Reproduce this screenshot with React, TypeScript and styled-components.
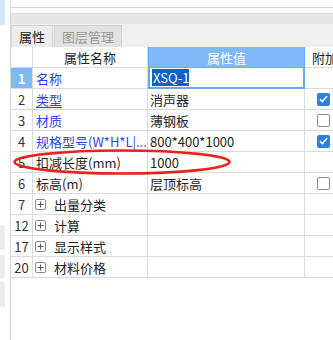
import React from "react";
import styled, { createGlobalStyle, css } from "styled-components";

const Global = createGlobalStyle`
  html, body { margin: 0; padding: 0; background: #ffffff; overflow: hidden; }
  body { font-family: "Microsoft YaHei", "Noto Sans CJK SC", "Noto Sans", sans-serif; }
`;

const Page = styled.div`
  position: relative;
  display: flex;
  width: 333px;
  height: 340px;
  overflow: hidden;
  background: #fff;
`;

const LeftStrip = styled.div`
  width: 10px;
  flex: none;
  display: flex;
  flex-direction: column;
`;

const StripBlock = styled.div<{ $h: number; $color: string; $gap?: number }>`
  width: 5px;
  height: ${(p) => p.$h}px;
  margin-top: ${(p) => p.$gap ?? 0}px;
  background: ${(p) => p.$color};
`;

const Main = styled.div`
  flex: 1;
  min-width: 0;
  border-left: 1px solid #d6d6d6;
  display: flex;
  flex-direction: column;
`;

const TopBox = styled.div`
  height: 7px;
  border-bottom: 1px solid #d4d4d4;
`;

const Gap = styled.div`
  height: 5px;
`;

const GrayStrip = styled.div`
  height: 10px;
  border-top: 1px solid #d6d6d6;
  background: #e6e6e6;
`;

const TabBar = styled.div`
  height: 23px;
  background: #f0f0f0;
  display: flex;
  align-items: flex-end;
  gap: 1px;
`;

const Tab = styled.div<{ $active?: boolean }>`
  height: 22px;
  box-sizing: border-box;
  padding: 0 7px;
  display: flex;
  align-items: center;
  font-size: 13px;
  border: 1px solid #d2d2d2;
  border-bottom: none;
  ${(p) =>
    p.$active
      ? css`
          background: #ededed;
          color: #222;
        `
      : css`
          background: #e2e2e2;
          color: #9a9a9a;
        `}
`;

const Grid = styled.div`
  display: grid;
  grid-template-columns: 22px 115px 157px 70px;
  grid-auto-rows: 21px;
  font-size: 13px;
  color: #1e1e1e;
`;

const Cell = styled.div<{ $align?: "center" | "left"; $pad?: number }>`
  box-sizing: border-box;
  border-right: 1px solid #dadada;
  border-bottom: 1px solid #dadada;
  display: flex;
  align-items: center;
  justify-content: ${(p) => (p.$align === "center" ? "center" : "flex-start")};
  padding-left: ${(p) => p.$pad ?? 0}px;
  white-space: nowrap;
  overflow: hidden;
  line-height: 1;
`;

const HeadCell = styled(Cell)<{ $blue?: boolean }>`
  ${(p) =>
    p.$blue &&
    css`
      background: #80b9f5;
      color: #ffffff;
      border: 1px solid #6da9ec;
      border-top: none;
    `}
`;

const NumCell = styled(Cell)<{ $sel?: boolean }>`
  justify-content: center;
  color: #333;
  ${(p) =>
    p.$sel &&
    css`
      background: #80b8f4;
      color: #fff;
      font-weight: bold;
    `}
`;

const NameText = styled.span<{ $link?: boolean; $underline?: boolean }>`
  color: ${(p) => (p.$link ? "#3143ee" : "#1e1e1e")};
  text-decoration: ${(p) => (p.$underline ? "underline" : "none")};
  text-underline-offset: 2px;
`;

const EditCell = styled(Cell)`
  border: 2px solid #6aa8ea;
  border-top: none;
  padding-left: 2px;
`;

const Selected = styled.span`
  background: #0d62c9;
  color: #fff;
  padding: 2px 0 2px 1px;
`;

const PlusBox = styled.span`
  width: 11px;
  height: 11px;
  box-sizing: border-box;
  border: 1px solid #8a8a8a;
  border-radius: 2px;
  display: inline-flex;
  align-items: center;
  justify-content: center;
  margin-right: 8px;
  flex: none;
  svg {
    display: block;
  }
`;

const Check = styled.span<{ $on: boolean }>`
  width: 13px;
  height: 13px;
  box-sizing: border-box;
  border-radius: 2px;
  display: inline-flex;
  align-items: center;
  justify-content: center;
  ${(p) =>
    p.$on
      ? css`
          background: #2f7fe3;
        `
      : css`
          background: #fff;
          border: 1px solid #8c8c8c;
        `}
`;

const Overlay = styled.svg`
  position: absolute;
  left: 0;
  top: 0;
  pointer-events: none;
`;

type Row = {
  n: number;
  name: string;
  value?: string;
  link?: boolean;
  underline?: boolean;
  check?: boolean;
  group?: boolean;
};

const rows: Row[] = [
  { n: 1, name: "名称", value: "XSQ-1", link: true },
  { n: 2, name: "类型", value: "消声器", link: true, underline: true, check: true },
  { n: 3, name: "材质", value: "薄钢板", link: true, check: false },
  { n: 4, name: "规格型号(W*H*L|...", value: "800*400*1000", link: true, check: true },
  { n: 5, name: "扣减长度(mm)", value: "1000" },
  { n: 6, name: "标高(m)", value: "层顶标高", check: false },
  { n: 7, name: "出量分类", group: true },
  { n: 12, name: "计算", group: true },
  { n: 17, name: "显示样式", group: true },
  { n: 20, name: "材料价格", group: true },
];

const Plus = () => (
  <PlusBox>
    <svg width="7" height="7" viewBox="0 0 7 7">
      <path d="M3.5 0.5v6M0.5 3.5h6" stroke="#555" strokeWidth="1" />
    </svg>
  </PlusBox>
);

const CheckMark = () => (
  <svg width="9" height="8" viewBox="0 0 9 8">
    <path d="M1 4.2l2.4 2.3L8 1.3" fill="none" stroke="#fff" strokeWidth="1.6" />
  </svg>
);

export default function App() {
  return (
    <>
      <Global />
      <Page>
        <LeftStrip>
          <StripBlock $h={25} $color="#d6e6f8" />
          <StripBlock $h={25} $color="#ececec" $gap={200} />
          <StripBlock $h={23} $color="#ececec" $gap={5} />
          <StripBlock $h={25} $color="#ececec" $gap={4} />
        </LeftStrip>
        <Main>
          <TopBox />
          <Gap />
          <GrayStrip />
          <TabBar>
            <Tab $active>属性</Tab>
            <Tab>图层管理</Tab>
          </TabBar>
          <Grid>
            <HeadCell />
            <HeadCell $align="center">属性名称</HeadCell>
            <HeadCell $align="center" $blue>
              属性值
            </HeadCell>
            <HeadCell $pad={7}>附加</HeadCell>
            {rows.map((r) => (
              <React.Fragment key={r.n}>
                <NumCell $sel={r.n === 1}>{r.n}</NumCell>
                <Cell $pad={r.group ? 2 : 3}>
                  {r.group && <Plus />}
                  <NameText $link={r.link} $underline={r.underline}>
                    {r.name}
                  </NameText>
                </Cell>
                {r.n === 1 ? (
                  <EditCell>
                    <Selected>{r.value}</Selected>
                  </EditCell>
                ) : (
                  <Cell $pad={2}>{r.value}</Cell>
                )}
                <Cell $pad={12}>
                  {r.check !== undefined && (
                    <Check $on={r.check}>{r.check && <CheckMark />}</Check>
                  )}
                </Cell>
              </React.Fragment>
            ))}
          </Grid>
        </Main>
        <Overlay width="333" height="340" viewBox="0 0 333 340">
          <ellipse
            cx="122"
            cy="162"
            rx="107.5"
            ry="11.5"
            fill="none"
            stroke="#e8221d"
            strokeWidth="2.6"
          />
        </Overlay>
      </Page>
    </>
  );
}
